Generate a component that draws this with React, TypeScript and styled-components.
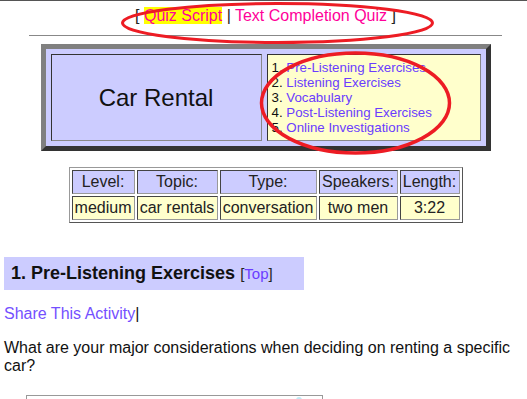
import React from 'react';
import styled, { createGlobalStyle } from 'styled-components';

const GlobalStyle = createGlobalStyle`
  body {
    margin: 0;
    background: #fff;
    color: #111;
    font-family: 'Liberation Sans', Arial, sans-serif;
  }
`;

const Page = styled.div`
  position: relative;
  box-sizing: border-box;
  width: 527px;
  height: 399px;
  overflow: hidden;
  border-top: 1px solid #555;
  padding-left: 4px;
`;

const Nav = styled.div`
  text-align: center;
  padding-top: 6px;
  font-size: 16px;
  color: #222;
`;

const NavLink = styled.a<{ $active?: boolean }>`
  color: #ff0099;
  text-decoration: none;
  background: ${(p) => (p.$active ? '#ffff00' : 'transparent')};
`;

const Rule = styled.div`
  width: 473px;
  margin: 10px auto 0;
  border-top: 1px solid #888;
`;

const TitleBox = styled.div`
  width: 450px;
  box-sizing: border-box;
  margin: 8px auto 0;
  border: 5px solid;
  border-color: #808080 #333 #333 #808080;
  background: #ccccff;
  padding: 5px;
  display: grid;
  grid-template-columns: 211px 214px;
  gap: 5px;
`;

const Cell = styled.div`
  box-sizing: border-box;
  height: 87px;
  border: 1px solid;
  border-color: #333 #888 #888 #333;
`;

const TitleCell = styled(Cell)`
  display: flex;
  align-items: center;
  justify-content: center;
  font-size: 24px;
  color: #111;
`;

const TocCell = styled(Cell)`
  background: #ffffcc;
  padding: 5px 4px;
  font-size: 13.3px;
  line-height: 15px;
  color: #111;
`;

const TocLink = styled.a`
  color: #6a3cff;
  text-decoration: none;
`;

const InfoTable = styled.table`
  margin: 16px auto 0;
  border: 1px solid;
  border-color: #999 #555 #555 #999;
  border-spacing: 2px;
  font-size: 16px;
  color: #222;
`;

const InfoCell = styled.td<{ $head?: boolean; $w: number }>`
  box-sizing: border-box;
  width: ${(p) => p.$w}px;
  height: 24px;
  padding: 1px 2px;
  text-align: center;
  white-space: nowrap;
  border: 1px solid;
  border-color: #444 #999 #999 #444;
  background: ${(p) => (p.$head ? '#ccccff' : '#ffffcc')};
`;

const Heading = styled.h3`
  box-sizing: border-box;
  width: 300px;
  height: 33px;
  margin: 34px 0 0;
  padding: 6px 7px;
  background: #ccccff;
  font-size: 18px;
  font-weight: bold;
  color: #111;
`;

const TopLink = styled.span`
  font-size: 15px;
  font-weight: normal;
  color: #222;

  a {
    color: #6a3cff;
    text-decoration: none;
  }
`;

const Share = styled.div`
  margin-top: 15px;
  font-size: 16px;
  line-height: 18px;

  a {
    color: #7450ff;
    text-decoration: none;
  }
`;

const Question = styled.p`
  margin: 16px 0 0;
  font-size: 16px;
  line-height: 18px;
  color: #111;
`;

const Frame = styled.div`
  width: 297px;
  height: 60px;
  box-sizing: border-box;
  margin: 20px 0 0 22px;
  border: 1px solid #999;
  display: flex;
  justify-content: flex-end;
  padding-right: 20px;
`;

const Dot = styled.span`
  width: 6px;
  height: 6px;
  margin-top: 1px;
  border-radius: 50%;
  background: #bfe9f5;
`;

const Marks = styled.svg`
  position: absolute;
  left: 0;
  top: 0;
  pointer-events: none;
`;

const toc = [
  'Pre-Listening Exercises',
  'Listening Exercises',
  'Vocabulary',
  'Post-Listening Exercises',
  'Online Investigations',
];

const info = [
  { head: 'Level:', value: 'medium', w: 63 },
  { head: 'Topic:', value: 'car rentals', w: 81 },
  { head: 'Type:', value: 'conversation', w: 97 },
  { head: 'Speakers:', value: 'two men', w: 79 },
  { head: 'Length:', value: '3:22', w: 60 },
];

const App = () => (
  <Page>
    <GlobalStyle />
    <Nav>
      [ <NavLink $active>Quiz Script</NavLink> | <NavLink>Text Completion Quiz</NavLink> ]
    </Nav>
    <Rule />
    <TitleBox>
      <TitleCell>Car Rental</TitleCell>
      <TocCell>
        {toc.map((item, index) => (
          <div key={`toc-${index}`}>
            {index + 1}. <TocLink>{item}</TocLink>
          </div>
        ))}
      </TocCell>
    </TitleBox>
    <InfoTable>
      <tbody>
        <tr>
          {info.map((col) => (
            <InfoCell key={col.head} $head $w={col.w}>
              {col.head}
            </InfoCell>
          ))}
        </tr>
        <tr>
          {info.map((col) => (
            <InfoCell key={col.value} $w={col.w}>
              {col.value}
            </InfoCell>
          ))}
        </tr>
      </tbody>
    </InfoTable>
    <Heading>
      1. Pre-Listening Exercises{' '}
      <TopLink>
        [<a>Top</a>]
      </TopLink>
    </Heading>
    <Share>
      <a>Share This Activity</a>|
    </Share>
    <Question>What are your major considerations when deciding on renting a specific car?</Question>
    <Frame>
      <Dot />
    </Frame>
    <Marks width="527" height="399" viewBox="0 0 527 399">
      <ellipse cx="277.5" cy="22" rx="155" ry="19.5" fill="none" stroke="#ed1c24" strokeWidth="3" />
      <ellipse cx="355.5" cy="102" rx="94" ry="50" fill="none" stroke="#ed1c24" strokeWidth="3.5" />
    </Marks>
  </Page>
);

export default App;
